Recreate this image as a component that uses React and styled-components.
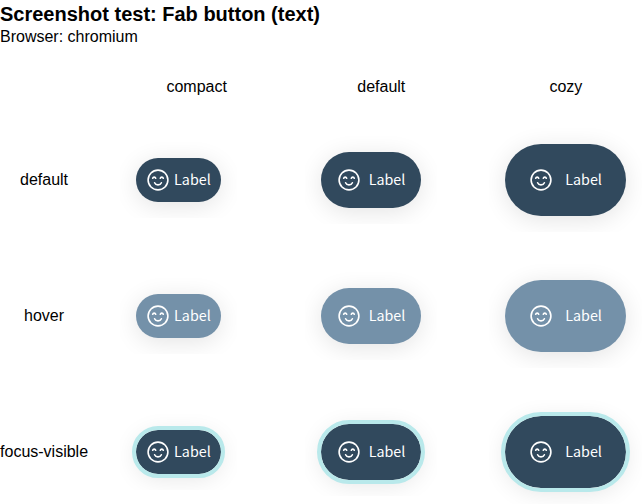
import React from "react";
import styled, { createGlobalStyle } from "styled-components";

const GlobalStyle = createGlobalStyle`
  body {
    margin: 0;
    background: #fff;
    color: #000;
    font: 16px/18px "Liberation Sans", Arial, sans-serif;
  }
`;

const Page = styled.main`
  width: 643px;
  height: 504px;
  overflow: hidden;
`;

const Title = styled.h1`
  margin: 0;
  font-size: 20px;
  line-height: 28px;
  font-weight: 700;
`;

const Browser = styled.div`
  height: 18px;
  margin-bottom: 32px;
`;

const Matrix = styled.div`
  display: grid;
  grid-template-columns: 88.1px repeat(3, 152.6px);
  grid-template-rows: 18px repeat(3, 104px);
  gap: 32px;
  align-items: center;
`;

const Heading = styled.div`
  text-align: center;
  white-space: nowrap;
`;

const ColumnHeading = styled(Heading)`
  padding-left: 0.6px;
`;

const Shot = styled.div`
  justify-self: start;
  padding: 16px;
  overflow: hidden;
`;

const sizes = {
  compact: { height: 44, padding: 10, gap: 4 },
  default: { height: 56, padding: 16, gap: 8 },
  cozy: { height: 72, padding: 24, gap: 12 },
};

const Fab = styled.button`
  display: flex;
  align-items: center;
  box-sizing: border-box;
  height: ${({ $size }) => sizes[$size].height}px;
  padding: 0 ${({ $size }) => sizes[$size].padding}px;
  gap: ${({ $size }) => sizes[$size].gap}px;
  border: 0;
  border-radius: 36px;
  background: ${({ $state }) => ($state === "hover" ? "#7491a9" : "#31495d")};
  color: #fff;
  outline: ${({ $state }) => ($state === "focus-visible" ? "4px solid #b9e9eb" : "none")};
  box-shadow: 0 4px 24px rgba(0, 0, 0, 0.11);
`;

const Label = styled.span`
  width: 36.6px;
  padding-bottom: 3px;
  font: 400 14.3px/21px "Noto Sans CJK SC", sans-serif;
  white-space: nowrap;
`;

const Icon = styled.svg`
  flex: none;
  width: 24px;
  height: 24px;
`;

function SmileIcon() {
  return (
    <Icon viewBox="0 0 24 24" fill="none" stroke="currentColor" strokeWidth="1.6" strokeLinecap="round">
      <circle cx="12" cy="12" r="9.9" />
      <path d="M6.7 10.2c.5-1.5 2.5-1.5 3 0M14.3 10.2c.5-1.5 2.5-1.5 3 0M8.6 14.8c1.2 2.8 5.6 2.8 6.8 0" />
    </Icon>
  );
}

const columns = ["compact", "default", "cozy"];
const states = ["default", "hover", "focus-visible"];

export default function App() {
  return (
    <Page>
      <GlobalStyle />
      <Title>Screenshot test: Fab button (text)</Title>
      <Browser>Browser: chromium</Browser>
      <Matrix>
        <span />
        {columns.map((size) => (
          <ColumnHeading key={size}>{size}</ColumnHeading>
        ))}
        {states.map((state) => (
          <React.Fragment key={state}>
            <Heading>{state}</Heading>
            {columns.map((size) => (
              <Shot key={size}>
                <Fab $size={size} $state={state}>
                  <SmileIcon />
                  <Label>Label</Label>
                </Fab>
              </Shot>
            ))}
          </React.Fragment>
        ))}
      </Matrix>
    </Page>
  );
}
